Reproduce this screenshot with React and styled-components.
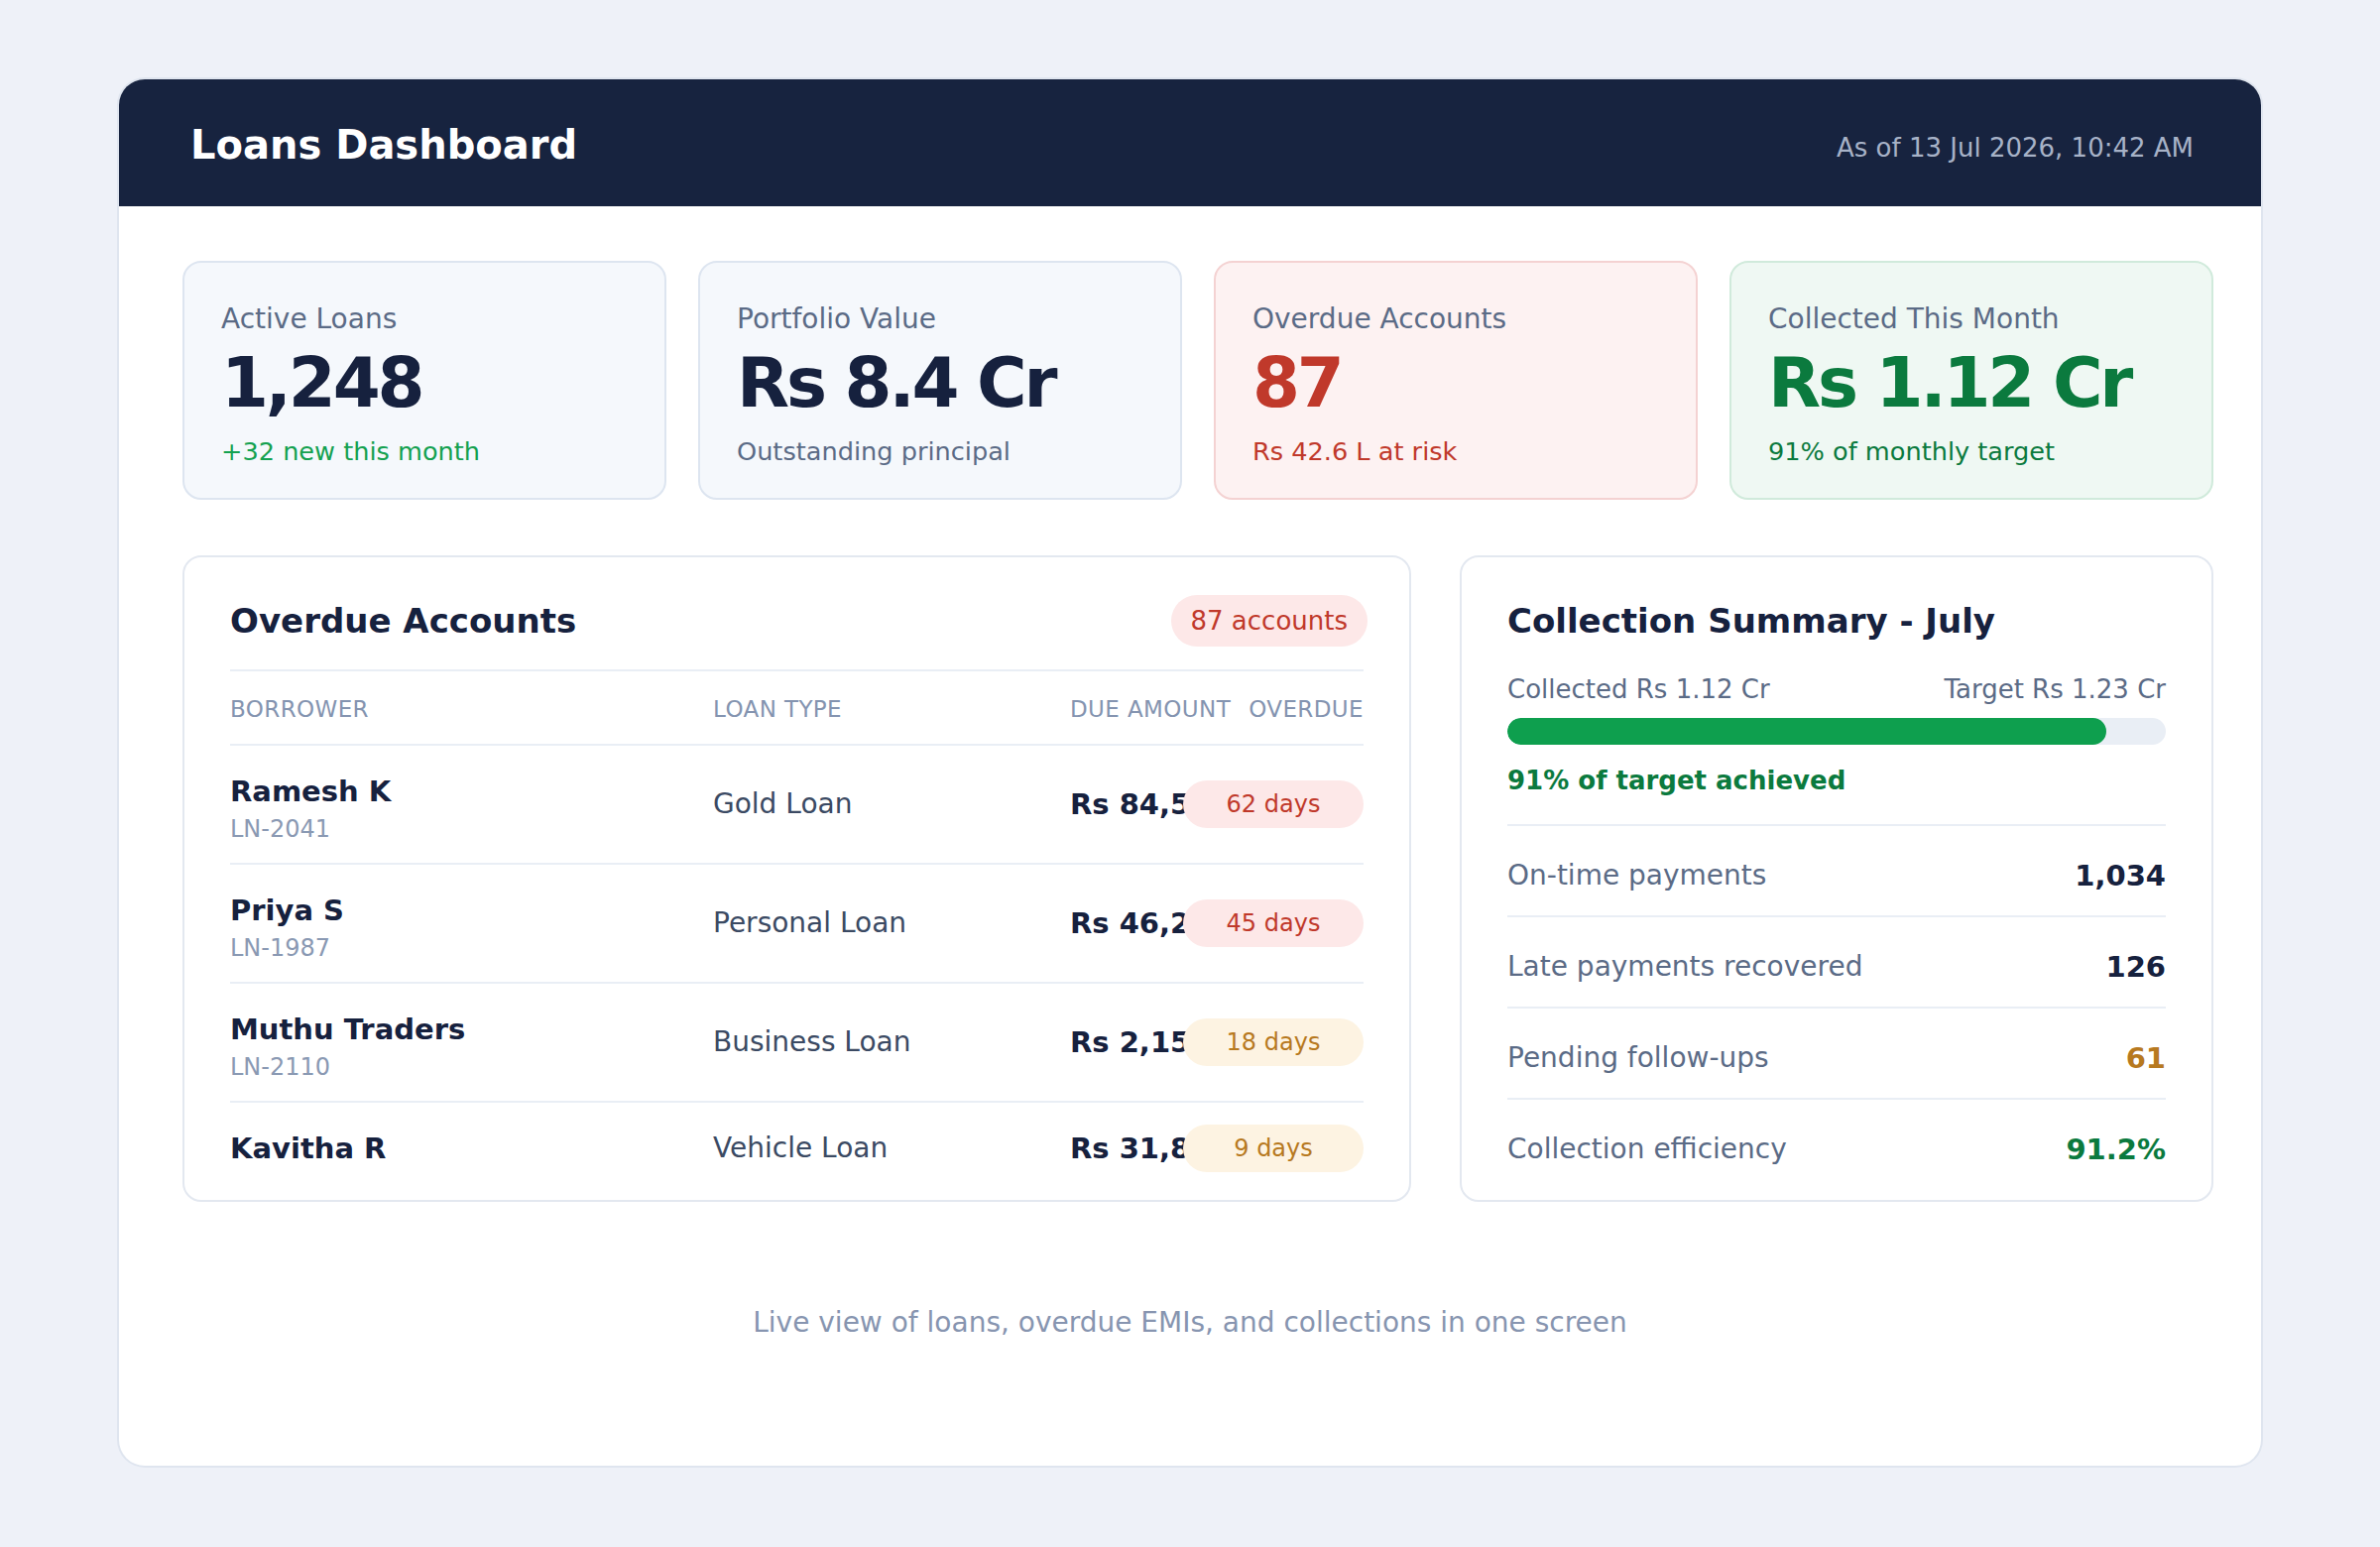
import React from "react";
import styled, { createGlobalStyle, css } from "styled-components";

const kpis = [
  { label: "Active Loans", value: "1,248", note: "+32 new this month", tone: "plain", noteTone: "up" },
  { label: "Portfolio Value", value: "Rs 8.4 Cr", note: "Outstanding principal", tone: "plain", noteTone: "muted" },
  { label: "Overdue Accounts", value: "87", note: "Rs 42.6 L at risk", tone: "danger", noteTone: "danger" },
  { label: "Collected This Month", value: "Rs 1.12 Cr", note: "91% of monthly target", tone: "success", noteTone: "success" },
];

const overdue = [
  { name: "Ramesh K", id: "LN-2041", type: "Gold Loan", amount: "Rs 84,500", days: 62 },
  { name: "Priya S", id: "LN-1987", type: "Personal Loan", amount: "Rs 46,200", days: 45 },
  { name: "Muthu Traders", id: "LN-2110", type: "Business Loan", amount: "Rs 2,15,000", days: 18 },
  { name: "Kavitha R", type: "Vehicle Loan", amount: "Rs 31,800", days: 9 },
];

const stats = [
  { label: "On-time payments", value: "1,034", tone: "plain" },
  { label: "Late payments recovered", value: "126", tone: "plain" },
  { label: "Pending follow-ups", value: "61", tone: "warn" },
  { label: "Collection efficiency", value: "91.2%", tone: "success" },
];

const cardTones = {
  plain: { bg: "#f5f8fc", border: "#dde5f0", value: "#16213e" },
  danger: { bg: "#fdf2f2", border: "#f4d2d2", value: "#c0392b" },
  success: { bg: "#eff8f3", border: "#d0eadb", value: "#0b7a3e" },
};

const textTones = {
  plain: "#16213e",
  muted: "#5b6b86",
  up: "#14a150",
  danger: "#c0392b",
  success: "#0b7a3e",
  warn: "#b7791f",
};

const GlobalStyle = createGlobalStyle`
  * { box-sizing: border-box; }
  html, body {
    margin: 0;
    padding: 0;
    background: #eef1f8;
  }
  body {
    font-family: "DejaVu Sans", "Liberation Sans", sans-serif;
    color: #16213e;
  }
`;

const Dashboard = () => {
  const collected = 91;

  return (
    <Page>
      <GlobalStyle />
      <Shell>
        <TopBar>
          <Title>Loans Dashboard</Title>
          <Stamp>As of 13 Jul 2026, 10:42 AM</Stamp>
        </TopBar>

        <Body>
          <KpiGrid>
            {kpis.map((k) => (
              <KpiCard key={k.label} $tone={k.tone}>
                <KpiLabel>{k.label}</KpiLabel>
                <KpiValue $tone={k.tone}>{k.value}</KpiValue>
                <KpiNote $tone={k.noteTone}>{k.note}</KpiNote>
              </KpiCard>
            ))}
          </KpiGrid>

          <Bottom>
            <Panel>
              <PanelHead>
                <PanelTitle>Overdue Accounts</PanelTitle>
                <CountPill>87 accounts</CountPill>
              </PanelHead>
              <Table>
                <HeadRow>
                  <HeadCell>Borrower</HeadCell>
                  <HeadCell>Loan Type</HeadCell>
                  <HeadCell>Due Amount</HeadCell>
                  <HeadCell $align="right">Overdue</HeadCell>
                </HeadRow>
                {overdue.map((r) => (
                  <Row key={r.name} $withId={!!r.id}>
                    <Borrower $withId={!!r.id}>
                      <Name>{r.name}</Name>
                      {r.id && <LoanId>{r.id}</LoanId>}
                    </Borrower>
                    <LoanType>{r.type}</LoanType>
                    <Amount>{r.amount}</Amount>
                    <DaysPill $late={r.days >= 30}>{r.days} days</DaysPill>
                  </Row>
                ))}
              </Table>
            </Panel>

            <Panel>
              <PanelHead>
                <PanelTitle>Collection Summary - July</PanelTitle>
              </PanelHead>
              <ProgressLabels>
                <span>Collected Rs 1.12 Cr</span>
                <span>Target Rs 1.23 Cr</span>
              </ProgressLabels>
              <Track>
                <Fill style={{ width: `${collected}%` }} />
              </Track>
              <Achieved>{collected}% of target achieved</Achieved>
              {stats.map((s) => (
                <StatRow key={s.label}>
                  <StatLabel>{s.label}</StatLabel>
                  <StatValue $tone={s.tone}>{s.value}</StatValue>
                </StatRow>
              ))}
            </Panel>
          </Bottom>
        </Body>

        <Footer>Live view of loans, overdue EMIs, and collections in one screen</Footer>
      </Shell>
    </Page>
  );
};

const Page = styled.div`
  min-height: 1560px;
  padding: 80px 120px;
`;

const Shell = styled.div`
  background: #ffffff;
  border-radius: 26px;
  overflow: hidden;
  box-shadow: 0 0 0 2px #dfe5ef;
`;

const TopBar = styled.header`
  height: 128px;
  background: #17233f;
  display: flex;
  align-items: center;
  justify-content: space-between;
  padding: 3px 68px 0 72px;
`;

const Title = styled.h1`
  margin: 0;
  font-size: 40px;
  font-weight: 700;
  line-height: 48px;
  color: #ffffff;
`;

const Stamp = styled.span`
  margin-top: 6px;
  font-size: 26px;
  line-height: 32px;
  color: #a7b2c7;
`;

const Body = styled.main`
  padding: 55px 48px 0 64px;
`;

const KpiGrid = styled.div`
  display: grid;
  grid-template-columns: repeat(4, 1fr);
  gap: 32px;
`;

const KpiCard = styled.div`
  background: ${(p) => cardTones[p.$tone].bg};
  border: 2px solid ${(p) => cardTones[p.$tone].border};
  border-radius: 19px;
  padding: 40px 40px 32px 37px;
`;

const KpiLabel = styled.div`
  font-size: 28px;
  line-height: 34px;
  color: #5b6b86;
`;

const KpiValue = styled.div`
  margin-top: 13px;
  font-size: 69px;
  font-weight: 700;
  line-height: 68px;
  letter-spacing: -3.2px;
  color: ${(p) => cardTones[p.$tone].value};
`;

const KpiNote = styled.div`
  margin-top: 20px;
  font-size: 25.6px;
  line-height: 30px;
  color: ${(p) => textTones[p.$tone]};
`;

const Bottom = styled.div`
  margin-top: 56px;
  display: grid;
  grid-template-columns: 1239px 1fr;
  grid-template-rows: 652px;
  gap: 49px;
`;

const Panel = styled.section`
  background: #ffffff;
  border: 2px solid #e3e8f0;
  border-radius: 19px;
  padding: 38px 46px 0;
  overflow: hidden;
`;

const PanelHead = styled.div`
  min-height: 52px;
  display: flex;
  align-items: center;
  justify-content: space-between;
`;

const PanelTitle = styled.h2`
  margin: 0;
  font-size: 34px;
  font-weight: 700;
  line-height: 40px;
  color: #16213e;
`;

const CountPill = styled.span`
  margin-right: -4px;
  padding: 10px 20px;
  border-radius: 999px;
  background: #fde8e8;
  color: #c0392b;
  font-size: 26px;
  line-height: 32px;
`;

const Table = styled.div`
  margin-top: 23px;
`;

const Cols = styled.div`
  display: grid;
  grid-template-columns: 487px 360px 114px 1fr;
  align-items: center;
  border-top: 2px solid #e9eef5;
`;

const HeadRow = styled(Cols)`
  padding: 24px 0 21px;
`;

const HeadCell = styled.div`
  font-size: 23px;
  line-height: 28px;
  letter-spacing: 0.4px;
  text-transform: uppercase;
  white-space: nowrap;
  color: #8494b0;
  text-align: ${(p) => p.$align || "left"};
`;

const Row = styled(Cols)`
  padding: ${(p) => (p.$withId ? "19px 0" : "22px 0 16px")};
`;

const Borrower = styled.div`
  display: flex;
  flex-direction: column;
  gap: 6px;
  ${(p) =>
    p.$withId &&
    css`
      padding-top: 10px;
    `}
`;

const Name = styled.div`
  font-size: 29px;
  font-weight: 700;
  line-height: 34px;
  color: #16213e;
`;

const LoanId = styled.div`
  font-size: 24px;
  line-height: 30px;
  color: #8a99b3;
`;

const LoanType = styled.div`
  font-size: 28px;
  line-height: 34px;
  color: #3b4a63;
`;

const Amount = styled.div`
  font-size: 29px;
  font-weight: 700;
  line-height: 34px;
  white-space: nowrap;
  color: #16213e;
`;

const DaysPill = styled.div`
  padding: 10px 0;
  border-radius: 999px;
  text-align: center;
  font-size: 24px;
  line-height: 28px;
  background: ${(p) => (p.$late ? "#fde8e8" : "#fdf3e2")};
  color: ${(p) => (p.$late ? "#c0392b" : "#b7791f")};
`;

const ProgressLabels = styled.div`
  margin-top: 27px;
  display: flex;
  justify-content: space-between;
  font-size: 26px;
  line-height: 32px;
  color: #5b6b86;
`;

const Track = styled.div`
  margin-top: 13px;
  height: 27px;
  border-radius: 999px;
  background: #e9eef5;
  overflow: hidden;
`;

const Fill = styled.div`
  height: 100%;
  border-radius: 999px;
  background: #0e9f4e;
`;

const Achieved = styled.div`
  margin: 20px 0 28px;
  font-size: 26px;
  font-weight: 700;
  line-height: 32px;
  color: #0b7a3e;
`;

const StatRow = styled.div`
  display: flex;
  align-items: center;
  justify-content: space-between;
  padding: 33px 0 23px;
  border-top: 2px solid #e9eef5;
`;

const StatLabel = styled.span`
  font-size: 28px;
  line-height: 34px;
  color: #5b6b86;
`;

const StatValue = styled.span`
  font-size: 29px;
  font-weight: 700;
  line-height: 34px;
  color: ${(p) => textTones[p.$tone]};
`;

const Footer = styled.footer`
  padding: 106px 0 128px;
  text-align: center;
  font-size: 28px;
  line-height: 32px;
  color: #8795b0;
`;

export default function App() {
  return <Dashboard />;
}
